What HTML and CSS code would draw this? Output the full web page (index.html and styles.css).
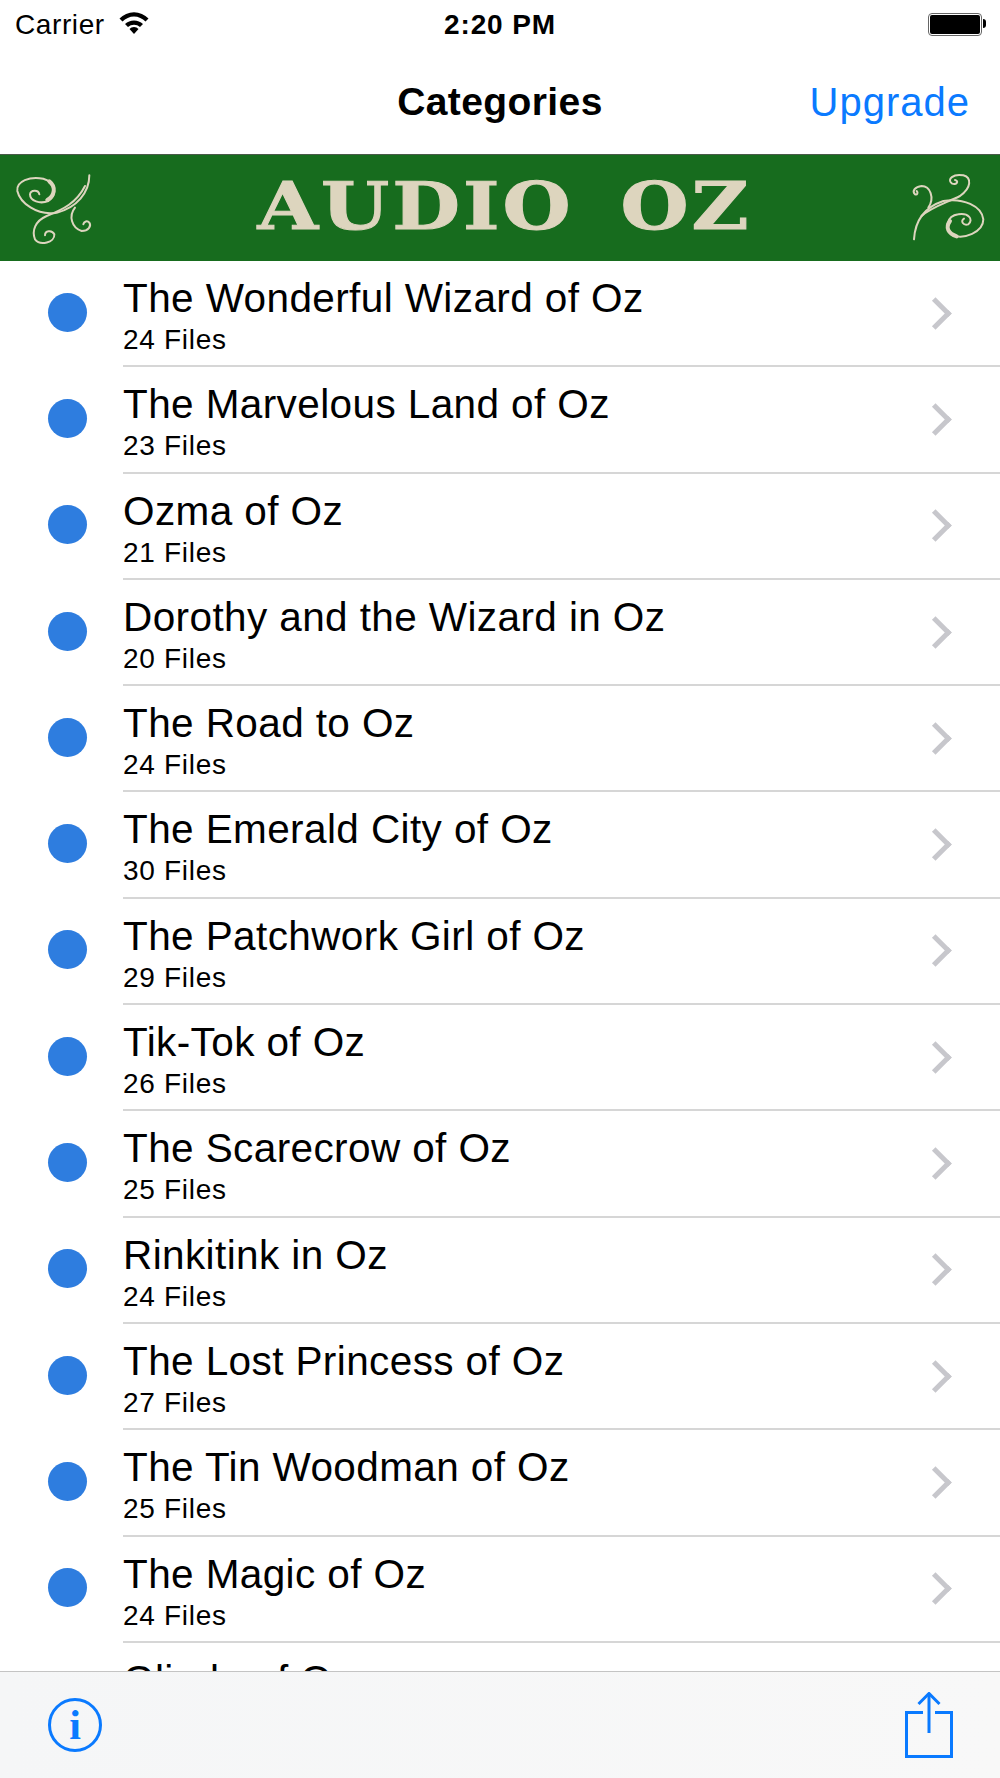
FILE: index.html
```html
<!DOCTYPE html>
<html lang="en">
  <head>
    <meta charset="UTF-8" />
    <meta name="viewport" content="width=device-width, initial-scale=1.0" />
    <title>Categories</title>
    <link rel="stylesheet" href="styles.css">
  </head>
  <body>
    <div class="screen">
      <div class="status-bar">
        <div class="status-left">
          <span>Carrier</span>
          <svg class="wifi" width="30" height="24" viewBox="0 0 30 24">
            <path d="M0.5 6.5 A20 20 0 0 1 29.5 6.5 L26.5 9.5 A16 16 0 0 0 3.500 9.5 Z" />
            <path d="M6 12 A13 13 0 0 1 24 12 L21 15 A9 9 0 0 0 9 15 Z" />
            <path d="M10.500 17 L15 22 L19.500 17 A6 6 0 0 0 10.500 17 Z" />
          </svg>
        </div>
        <div class="status-time">2:20 PM</div>
        <div class="battery"><div class="battery-fill"></div></div>
      </div>

      <div class="nav-bar">
        <div class="nav-title">Categories</div>
        <div class="nav-action">Upgrade</div>
      </div>

      <div class="banner">
        <svg class="flourish" width="90" height="85" viewBox="0 0 270 255">
          <path d="M238 28 C238 80 200 125 140 140 C80 150 30 110 22 75 C18 45 60 30 100 38 C135 48 145 85 115 105 C90 115 60 105 60 85 C62 72 85 70 88 85" />
          <path d="M225 60 C200 110 160 130 110 150 C75 165 65 195 75 220 C90 240 135 230 133 205 C125 190 105 195 105 208" />
          <path d="M195 125 C175 150 185 185 215 195 C235 195 245 180 238 170 C232 163 222 166 220 175" />
          <path class="thick" d="M118 46 C138 62 135 88 112 102" />
        </svg>
        <div class="banner-title">AUDIO OZ</div>
        <svg class="flourish" width="90" height="85" viewBox="0 0 270 255">
          <path d="M42 220 C45 170 70 125 130 105 C190 95 245 120 250 160 C250 200 190 220 160 208 C130 190 140 150 175 145 C205 140 222 160 205 175 C190 180 180 165 192 158" />
          <path d="M65 150 C90 125 140 110 180 90 C215 65 215 35 190 28 C160 22 140 40 155 52 C170 58 178 45 165 42" />
          <path d="M85 125 C105 95 90 60 65 60 C45 62 35 75 45 85 C52 88 55 80 50 75" />
          <path class="thick" d="M150 165 C135 185 145 203 170 211" />
        </svg>
      </div>

      <ul class="book-list">
        <li class="book-row">
          <span class="dot"></span>
          <div class="book-info">
            <div class="book-name">The Wonderful Wizard of Oz</div>
            <div class="book-files">24 Files</div>
          </div>
          <span class="chevron"></span>
        </li>
        <li class="book-row">
          <span class="dot"></span>
          <div class="book-info">
            <div class="book-name">The Marvelous Land of Oz</div>
            <div class="book-files">23 Files</div>
          </div>
          <span class="chevron"></span>
        </li>
        <li class="book-row">
          <span class="dot"></span>
          <div class="book-info">
            <div class="book-name">Ozma of Oz</div>
            <div class="book-files">21 Files</div>
          </div>
          <span class="chevron"></span>
        </li>
        <li class="book-row">
          <span class="dot"></span>
          <div class="book-info">
            <div class="book-name">Dorothy and the Wizard in Oz</div>
            <div class="book-files">20 Files</div>
          </div>
          <span class="chevron"></span>
        </li>
        <li class="book-row">
          <span class="dot"></span>
          <div class="book-info">
            <div class="book-name">The Road to Oz</div>
            <div class="book-files">24 Files</div>
          </div>
          <span class="chevron"></span>
        </li>
        <li class="book-row">
          <span class="dot"></span>
          <div class="book-info">
            <div class="book-name">The Emerald City of Oz</div>
            <div class="book-files">30 Files</div>
          </div>
          <span class="chevron"></span>
        </li>
        <li class="book-row">
          <span class="dot"></span>
          <div class="book-info">
            <div class="book-name">The Patchwork Girl of Oz</div>
            <div class="book-files">29 Files</div>
          </div>
          <span class="chevron"></span>
        </li>
        <li class="book-row">
          <span class="dot"></span>
          <div class="book-info">
            <div class="book-name">Tik-Tok of Oz</div>
            <div class="book-files">26 Files</div>
          </div>
          <span class="chevron"></span>
        </li>
        <li class="book-row">
          <span class="dot"></span>
          <div class="book-info">
            <div class="book-name">The Scarecrow of Oz</div>
            <div class="book-files">25 Files</div>
          </div>
          <span class="chevron"></span>
        </li>
        <li class="book-row">
          <span class="dot"></span>
          <div class="book-info">
            <div class="book-name">Rinkitink in Oz</div>
            <div class="book-files">24 Files</div>
          </div>
          <span class="chevron"></span>
        </li>
        <li class="book-row">
          <span class="dot"></span>
          <div class="book-info">
            <div class="book-name">The Lost Princess of Oz</div>
            <div class="book-files">27 Files</div>
          </div>
          <span class="chevron"></span>
        </li>
        <li class="book-row">
          <span class="dot"></span>
          <div class="book-info">
            <div class="book-name">The Tin Woodman of Oz</div>
            <div class="book-files">25 Files</div>
          </div>
          <span class="chevron"></span>
        </li>
        <li class="book-row">
          <span class="dot"></span>
          <div class="book-info">
            <div class="book-name">The Magic of Oz</div>
            <div class="book-files">24 Files</div>
          </div>
          <span class="chevron"></span>
        </li>
        <li class="book-row">
          <span class="dot"></span>
          <div class="book-info">
            <div class="book-name">Glinda of Oz</div>
          </div>
          <span class="chevron"></span>
        </li>
      </ul>

      <div class="toolbar">
        <svg class="info-icon" width="54" height="54" viewBox="0 0 54 54">
          <circle cx="27" cy="27" r="25.500" />
          <text class="info-letter" x="27" y="41">i</text>
        </svg>
        <svg class="share-icon" width="48" height="66" viewBox="0 0 48 66">
          <path d="M18 20.500 H1.500 V64.500 H46.500 V20.500 H30" />
          <path d="M24 1.500 V41" />
          <path d="M13.500 12 L24 1.500 L34.500 12" />
        </svg>
      </div>
    </div>
  </body>
</html>
```
FILE: styles.css
```css
body {
  margin: 0;
  font-family: "Liberation Sans", Arial, sans-serif;
  color: #000;
  background-color: #fff;
}

.screen {
  width: 1000px;
  height: 1778px;
  display: flex;
  flex-direction: column;
  overflow: hidden;
}

.status-bar {
  height: 50px;
  padding: 0 15px;
  display: flex;
  justify-content: space-between;
  align-items: center;
  position: relative;
  font-size: 28px;
  flex-shrink: 0;
}

.status-left {
  display: flex;
  align-items: center;
  gap: 14px;
  letter-spacing: 0.6px;
}

.wifi {
  fill: #000;
  margin-bottom: 2px;
}

.status-time {
  font-weight: bold;
  letter-spacing: 0.9px;
  position: absolute;
  left: 0;
  right: 0;
  text-align: center;
}

.battery {
  width: 54px;
  height: 23px;
  margin-right: 3px;
  margin-bottom: 1px;
  padding: 1px;
  box-sizing: border-box;
  border: 1px solid #666;
  border-radius: 4px;
  position: relative;
}

.battery::after {
  content: "";
  position: absolute;
  right: -5px;
  top: 5px;
  width: 3px;
  height: 9px;
  background-color: #000;
  border-radius: 0 3px 3px 0;
}

.battery-fill {
  height: 100%;
  background-color: #000;
  border-radius: 2px;
}

.nav-bar {
  height: 104px;
  padding: 0 30px 0 0;
  display: flex;
  justify-content: flex-end;
  align-items: center;
  position: relative;
  flex-shrink: 0;
}

.nav-title {
  position: absolute;
  left: 0;
  right: 0;
  text-align: center;
  font-size: 39px;
  letter-spacing: 0.4px;
  font-weight: bold;
}

.nav-action {
  color: #0a7aff;
  font-size: 40px;
  letter-spacing: 1px;
}

.banner {
  height: 107px;
  box-sizing: border-box;
  border-top: 1px solid #4a5a4a;
  padding: 0 10px;
  background-color: #176c1e;
  display: flex;
  justify-content: space-between;
  align-items: center;
  flex-shrink: 0;
}

.banner-title {
  font-family: "DejaVu Serif", serif;
  font-weight: bold;
  font-size: 66px;
  letter-spacing: 2.5px;
  color: #ddd5be;
  word-spacing: 14px;
  margin: 0 0 4px 10px;
  transform: scaleX(1.185);
  -webkit-text-stroke: 1px #ddd5be;
}

.flourish {
  fill: none;
  stroke: #ddd5be;
  stroke-width: 6;
  stroke-linecap: round;
}

.flourish .thick {
  stroke-width: 12;
}

.book-list {
  list-style: none;
  margin: 0;
  padding: 0;
  flex-grow: 1;
  min-height: 0;
  overflow: hidden;
}

.book-row {
  height: 106.3px;
  box-sizing: border-box;
  display: flex;
  align-items: center;
}

.dot {
  width: 39px;
  height: 39px;
  margin: 0 36px 4px 48px;
  background-color: #2e7ddf;
  border-radius: 50%;
  flex-shrink: 0;
}

.book-info {
  flex-grow: 1;
  height: 100%;
  box-sizing: border-box;
  padding-top: 14px;
  border-bottom: 2px solid #d6d6d6;
}

.book-name {
  font-size: 40.5px;
  letter-spacing: 0.4px;
  line-height: 46px;
}

.book-files {
  font-size: 28px;
  letter-spacing: 0.7px;
  line-height: 38px;
}

.chevron {
  margin: 0 53.5px 2px -76.5px;
  width: 18px;
  height: 18px;
  border-top: 5px solid #c7c7cc;
  border-right: 5px solid #c7c7cc;
  transform: rotate(45deg);
  flex-shrink: 0;
}

.toolbar {
  height: 107px;
  box-sizing: border-box;
  padding: 0 47px 0 48px;
  border-top: 1px solid #c4c4c4;
  background: linear-gradient(90deg, #f5f6f7, #f8f8f8);
  display: flex;
  justify-content: space-between;
  align-items: center;
  flex-shrink: 0;
}

.info-icon,
.share-icon {
  fill: none;
  stroke: #0a7aff;
  stroke-width: 3;
}

.info-letter {
  fill: #0a7aff;
  stroke: none;
  font-family: "Liberation Serif", serif;
  font-weight: bold;
  font-size: 42px;
  text-anchor: middle;
}
```
